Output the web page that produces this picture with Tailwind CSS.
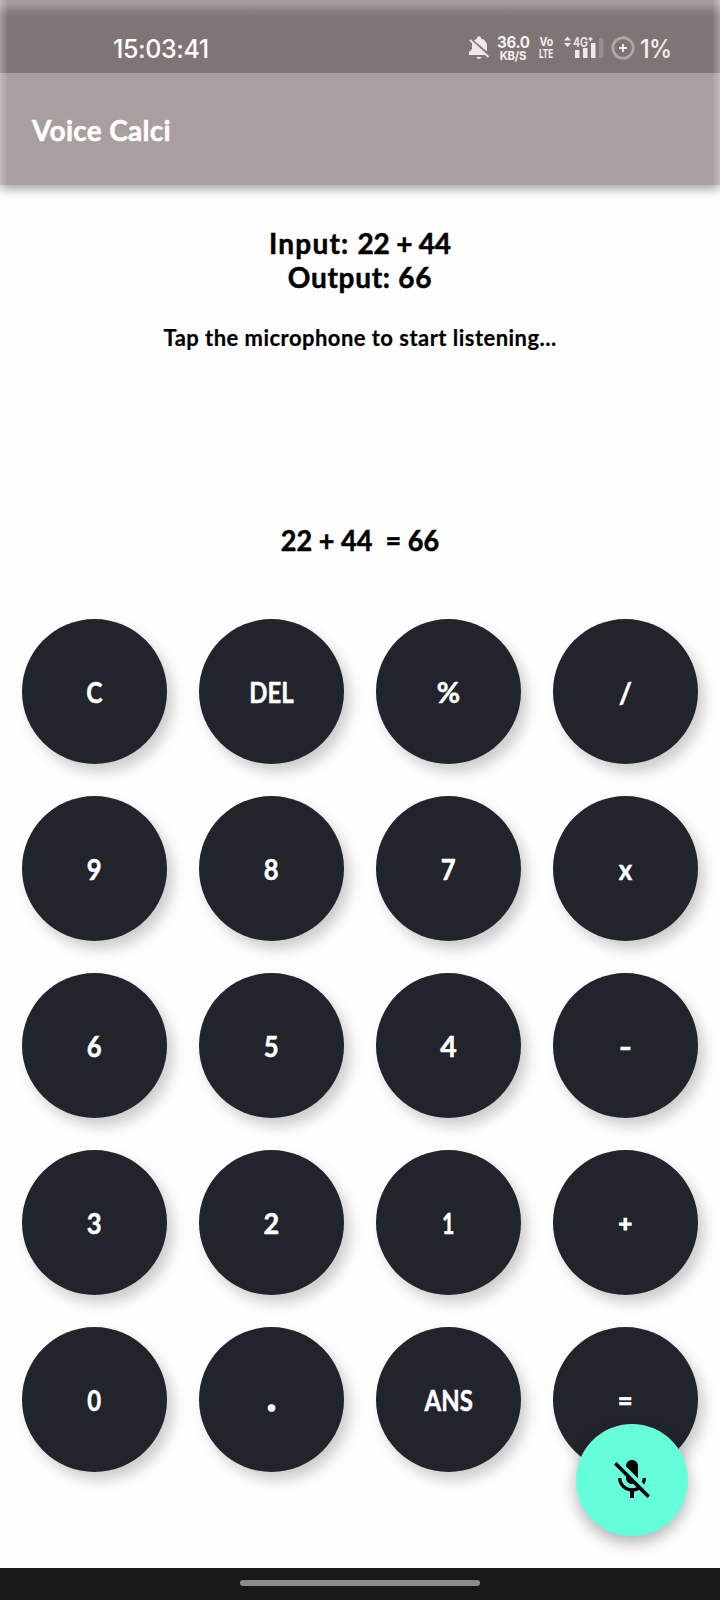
<!DOCTYPE html>
<html lang="en">
<head>
<meta charset="utf-8">
<title>Voice Calci</title>
<script src="https://cdn.jsdelivr.net/npm/@tailwindcss/browser@4"></script>
</head>
<body class="bg-white">
<div class="relative flex h-[1600px] w-[720px] flex-col overflow-hidden bg-[#fefefe] font-['Lato',sans-serif] font-bold text-black">
  <header class="relative flex h-[185px] flex-none flex-col bg-[#a99f9e] shadow-[0_4px_10px_rgba(0,0,0,0.36)]">
    <div class="h-[73px] bg-linear-to-b from-[#a59b9b] from-[3px] via-[#8b8181] via-[11px] to-[#7f7575] to-[17px]">
      <div class="flex h-full items-start font-['Inter',sans-serif]">
        <div class="ml-[113px] mt-[34px] w-[98px] whitespace-nowrap text-[25px] leading-[31px] font-medium tracking-[-0.4px] text-white">15:03:41</div>
        <svg class="ml-[257px] mt-[36px] h-[24px] w-[22px] flex-none" viewBox="0 0 22 24" fill="#eeeaea"><path d="M9 2.500c0-3 4-3 4 0 4 1 6 4 6 8v5L6 4.500zM4 7l13.500 12H1v-3l3-3z"/><path d="M8.500 21h5c-.6 2.500-4.400 2.500-5 0z"/><path d="M2 4L20.500 21" fill="none" stroke="#eeeaea" stroke-width="1.800"/></svg>
        <div class="ml-[6px] mt-[34px] flex w-[34px] flex-none flex-col items-center text-[#f4f1f1]"><span class="scale-x-[.94] text-[16px] leading-[16px] font-bold tracking-[-0.3px]">36.0</span><span class="scale-x-[.95] text-[12px] leading-[12px] font-bold tracking-[-0.3px]">KB/S</span></div>
        <div class="ml-[8px] mt-[36px] flex w-[17px] flex-none flex-col items-center text-[11.5px] font-bold text-[#f4f1f1]"><span class="scale-x-[.92] leading-[12px]">Vo</span><span class="scale-x-[.7] leading-[12px]">LTE</span></div>
        <svg class="ml-[8px] mt-[35px] h-[25px] w-[42px] flex-none" viewBox="0 0 42 25" fill="#eeeaea"><path d="M1 5.500l3.500-4L8 5.500zM1 8h7L4.500 12z"/><text x="10" y="11.500" font-size="13" font-weight="600" textLength="15" lengthAdjust="spacingAndGlyphs">4G</text><path d="M25.500 4h4M27.500 2v4" stroke="#eeeaea" stroke-width="1.500"/><path d="M12 15h4.500v8H12zM20 13h4.500v10H20zM28 8h4.500v15H28z"/><path d="M36 3h4.500v20H36z" opacity=".22"/></svg>
        <svg class="ml-[6px] mt-[36px] h-[24px] w-[24px] flex-none" viewBox="0 0 24 24" fill="none"><circle cx="12" cy="12" r="10.200" stroke="#b0a7a6" stroke-width="2.600"/><path d="M10 2Q12 1.600 14 2" stroke="#b8ac95" stroke-width="2.600"/><path d="M8 12h8M12 8v8" stroke="#f4f1f1" stroke-width="1.800"/></svg>
        <div class="ml-[5px] mt-[34px] origin-left scale-x-[.93] whitespace-nowrap text-[25px] leading-[31px] font-medium tracking-[-0.6px] text-[#f4f1f1]">1%</div>
      </div>
    </div>
    <div class="flex h-[112px] items-center pl-8">
      <h1 class="mt-[2px] whitespace-nowrap text-[28px] leading-[34px] font-bold tracking-[0.3px] text-white [-webkit-text-stroke:0.5px_white]">Voice Calci</h1>
    </div>
    <div class="pointer-events-none absolute inset-y-0 left-0 w-2 bg-linear-to-r from-white/30 to-transparent"></div>
    <div class="pointer-events-none absolute inset-y-0 right-0 w-2 bg-linear-to-l from-white/30 to-transparent"></div>
  </header>

  <main class="flex flex-1 flex-col items-center [-webkit-text-stroke:0.5px_currentColor]">
    <p class="mt-[41px] whitespace-nowrap text-[28px] leading-[34px] tracking-[1.2px]">Input: <span class="tracking-[-0.2px]">22 + 44</span></p>
    <p class="whitespace-nowrap text-[28px] leading-[34px] tracking-[0.7px]">Output: 66</p>
    <p class="mt-[28px] whitespace-nowrap text-[22px] leading-[32px] tracking-[0.46px] [-webkit-text-stroke:0.2px_black]">Tap the microphone to start listening...</p>
    <p class="mt-[169px] scale-x-[.965] whitespace-pre text-[28px] leading-[34px]">22 + 44  = 66</p>
    <div class="mt-[62px] grid grid-cols-[repeat(4,145px)] gap-8 text-[28.5px] leading-[34px] text-white *:flex *:h-[145px] *:items-center *:justify-center *:rounded-full *:bg-[#22242b] *:shadow-[6px_8px_14px_rgba(0,0,0,0.2)]">
      <button><span class="scale-x-[.86]">C</span></button><button><span class="scale-x-[.84]">DEL</span></button><button><span>%</span></button><button><span>/</span></button>
      <button><span class="scale-x-[.9]">9</span></button><button><span class="scale-x-[.9]">8</span></button><button><span class="scale-x-[.9]">7</span></button><button><span class="scale-x-[.9]">x</span></button>
      <button><span class="scale-x-[.9]">6</span></button><button><span class="scale-x-[.9]">5</span></button><button><span>4</span></button><button><span class="scale-x-[1.25]">-</span></button>
      <button><span class="scale-x-[.9]">3</span></button><button><span class="scale-x-[.95]">2</span></button><button><span class="scale-x-[.75]">1</span></button><button><span class="scale-[.82] [-webkit-text-stroke:1.4px_white]">+</span></button>
      <button><span class="scale-x-[.84]">0</span></button><button><span class="-translate-y-[4px] text-[40px] [-webkit-text-stroke:1.5px_white]">.</span></button><button><span class="scale-x-[.84]">ANS</span></button><button><span class="scale-x-[.9] [-webkit-text-stroke:0.6px_white]">=</span></button>
    </div>
  </main>

  <button class="absolute top-[1424px] left-[576px] flex size-28 items-center justify-center rounded-full bg-[#64ffda] shadow-[0_7px_16px_rgba(0,0,0,0.3)]" aria-label="Microphone off">
    <svg class="size-12" viewBox="0 0 24 24" fill="#000"><path d="M19 11h-1.700c0 .74-.16 1.430-.43 2.050l1.230 1.230c.56-.98.900-2.090.900-3.280zm-4.020.17c0-.06.02-.11.02-.17V5c0-1.660-1.340-3-3-3S9 3.340 9 5v.18l5.980 5.990zM4.270 3L3 4.270l6.010 6.010V11c0 1.660 1.330 3 2.990 3 .22 0 .44-.03.65-.08l1.660 1.660c-.71.33-1.500.52-2.310.52-2.760 0-5.300-2.100-5.300-5.100H5c0 3.410 2.720 6.230 6 6.720V21h2v-3.280c.91-.13 1.770-.45 2.540-.9L19.730 21 21 19.730 4.270 3z"/></svg>
  </button>

  <footer class="flex h-8 flex-none justify-center bg-[#191919] pt-3"><div class="h-[6px] w-[240px] rounded-full bg-[#8c8c8c]"></div></footer>
</div>
</body>
</html>
